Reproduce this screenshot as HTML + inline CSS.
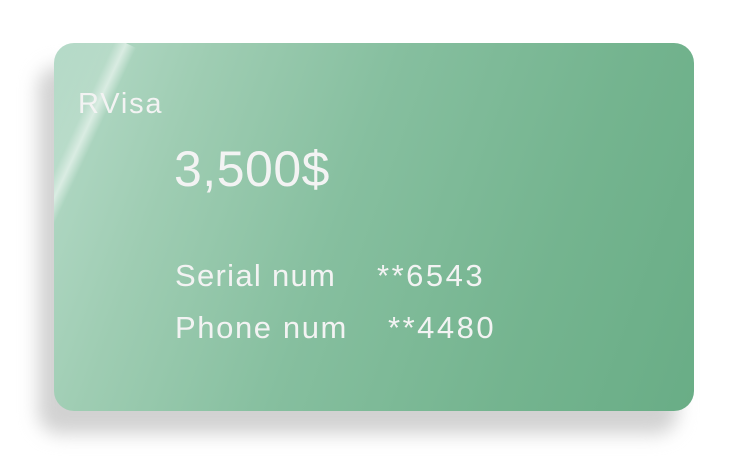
<!DOCTYPE html>
<html><head><style>
html,body{margin:0;padding:0;background:#fff;width:749px;height:474px;overflow:hidden;font-family:"Liberation Sans",sans-serif}
.sh{position:absolute;left:38px;top:66px;width:640px;height:368px;border-radius:22px;background:#d2d2d2;filter:blur(9px)}
.card{position:absolute;left:54px;top:43px;width:640px;height:368px;border-radius:20px;overflow:hidden;
background:linear-gradient(110deg,#b6dbc9 0%,#9fcdb3 20%,#86bf9f 45%,#74b48f 75%,#69ad86 100%)}
.gl{position:absolute;left:-40px;top:-20px;width:80px;height:260px;transform:rotate(25deg);
background:linear-gradient(90deg,rgba(255,255,255,0) 0%,rgba(255,255,255,0.12) 60%,rgba(255,255,255,0.55) 74%,rgba(255,255,255,0) 88%)}
.t{position:absolute;color:#f3f3f3;white-space:nowrap}
</style></head><body>
<div class="sh"></div>
<div class="card"><div class="gl"></div></div>
<div class="t" style="left:78px;top:88px;font-size:29px;letter-spacing:1.8px">RVisa</div>
<div class="t" style="left:174px;top:140px;font-size:50px;letter-spacing:0.5px">3,500$</div>
<div class="t" style="left:175px;top:258px;font-size:31px;letter-spacing:1.3px">Serial num</div>
<div class="t" style="left:377px;top:258px;font-size:31px;letter-spacing:2.5px">**6543</div>
<div class="t" style="left:175px;top:310px;font-size:31px;letter-spacing:1.6px">Phone num</div>
<div class="t" style="left:388px;top:310px;font-size:31px;letter-spacing:2.5px">**4480</div>
</body></html>
